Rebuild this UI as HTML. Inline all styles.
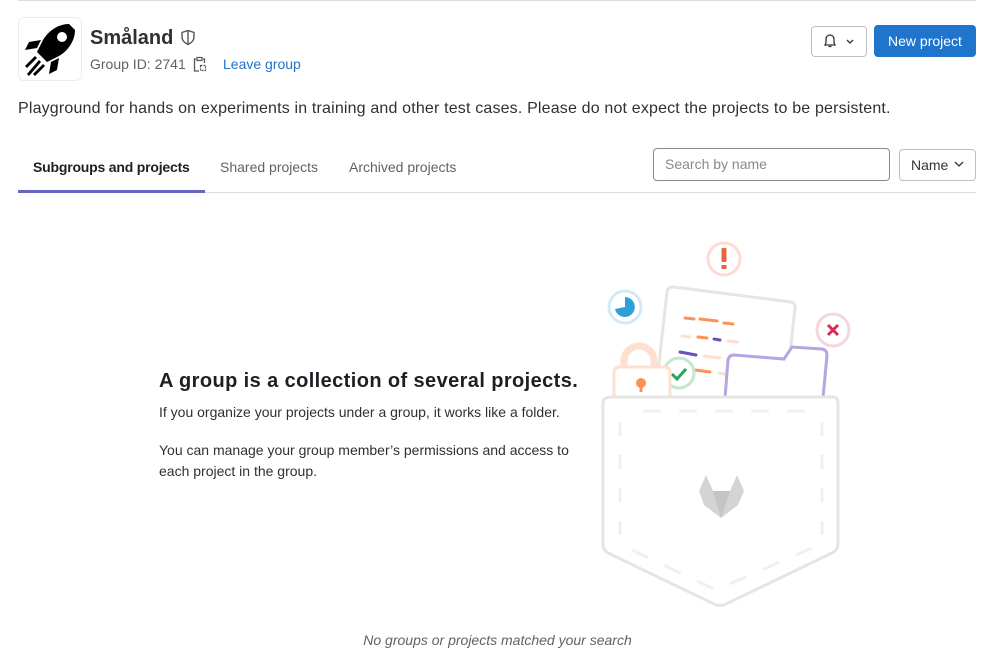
<!DOCTYPE html>
<html><head><meta charset="utf-8"><style>
*{margin:0;padding:0;box-sizing:border-box}
body{width:1000px;height:672px;background:#fff;font-family:"Liberation Sans",sans-serif;color:#303030;position:relative;overflow:hidden}
.a{position:absolute;white-space:nowrap}
</style></head><body>
<div class="a" style="left:18px;top:0;width:958px;height:1px;background:#dcdcde"></div>
<div class="a" style="left:18px;top:17px;width:64px;height:64px;border:1px solid #ececef;border-radius:6px;background:#fff">
<svg width="62" height="62" viewBox="0 0 62 62"><g fill="#000">
<path d="M50 6 C40 6 30 12 24 22 L18 34 L28 44 L40 38 C50 32 56 22 56 12 Z"/>
<path d="M22 22 L10 24 L6 32 L18 30 Z"/><path d="M40 40 L38 52 L30 56 L32 44 Z"/>
<path d="M16 38 L6 48 L8 50 L18 40 Z"/><path d="M20 42 L8 56 L10 58 L22 44 Z"/><path d="M24 46 L14 56 L16 58 L26 48 Z"/>
</g><circle cx="43" cy="19" r="5" fill="#fff"/></svg></div>
<div class="a" style="left:90px;top:27px;font-size:20px;font-weight:bold;color:#303030">Småland</div>
<svg class="a" style="left:180px;top:29px" width="16" height="17" viewBox="0 0 16 17"><path d="M8 1.5 L14 3.5 V8 C14 11.5 11 14 8 15.5 C5 14 2 11.5 2 8 V3.5 Z" fill="none" stroke="#555" stroke-width="1.4"/><path d="M8 2 V15" stroke="#555" stroke-width="1.4"/></svg>
<div class="a" style="left:90px;top:56px;font-size:14px;color:#626168">Group ID: 2741</div>
<svg class="a" style="left:193px;top:56px" width="14" height="17" viewBox="0 0 14 17"><path d="M3 3 H1.5 V15 H6 M10 3 H11.5 V7" fill="none" stroke="#555" stroke-width="1.3"/><rect x="4" y="1.5" width="5" height="3" fill="none" stroke="#555" stroke-width="1.2"/><rect x="7.5" y="9.5" width="5" height="5" fill="none" stroke="#555" stroke-width="1.2" stroke-dasharray="2 1"/></svg>
<div class="a" style="left:223px;top:56px;font-size:14px;color:#1f75cb">Leave group</div>
<div class="a" style="left:811px;top:26px;width:56px;height:31px;border:1px solid #bfbfc3;border-radius:4px"></div>
<svg class="a" style="left:822px;top:33px" width="34" height="16" viewBox="0 0 34 16"><path d="M3 12 H13 L12 10 V6 A4 4 0 0 0 4 6 V10 Z M6.5 13.5 H9.5" fill="none" stroke="#333" stroke-width="1.3"/><path d="M25 7 L28 10 L31 7" fill="none" stroke="#333" stroke-width="1.3"/></svg>
<div class="a" style="left:874px;top:25px;width:102px;height:32px;background:#1f75cb;border-radius:4px;color:#fff;font-size:14px;text-align:center;line-height:32px">New project</div>
<div class="a" style="left:18px;top:100px;font-size:16px;letter-spacing:0.17px;color:#303030">Playground for hands on experiments in training and other test cases. Please do not expect the projects to be persistent.</div>
<div class="a" style="left:33px;top:159px;font-size:14px;font-weight:bold;color:#1f1e24;letter-spacing:-0.2px">Subgroups and projects</div>
<div class="a" style="left:220px;top:159px;font-size:14px;color:#626168">Shared projects</div>
<div class="a" style="left:349px;top:159px;font-size:14px;color:#626168">Archived projects</div>
<div class="a" style="left:18px;top:192px;width:958px;height:1px;background:#dcdcde"></div>
<div class="a" style="left:18px;top:190px;width:187px;height:3px;background:#6666c4"></div>
<div class="a" style="left:653px;top:148px;width:237px;height:33px;border:1px solid #89888d;border-radius:4px;font-size:14px;color:#89888d;padding-left:11px;line-height:31px">Search by name</div>
<div class="a" style="left:899px;top:149px;width:77px;height:32px;border:1px solid #bfbfc3;border-radius:4px;font-size:14px;color:#333;padding-left:11px;line-height:30px">Name</div>
<svg class="a" style="left:953px;top:159px" width="12" height="10"><path d="M2 3 L6 7 L10 3" fill="none" stroke="#333" stroke-width="1.3"/></svg>
<div class="a" style="left:159px;top:370px;font-size:20px;font-weight:bold;color:#1f1e24;letter-spacing:0.4px">A group is a collection of several projects.</div>
<div class="a" style="left:159px;top:404px;font-size:14px;color:#303030">If you organize your projects under a group, it works like a folder.</div>
<div class="a" style="left:159px;top:440px;font-size:14px;color:#303030;line-height:21px">You can manage your group member’s permissions and access to<br>each project in the group.</div>
<div class="a" style="left:0;width:1000px;top:632px;text-align:center;font-size:14px;font-style:italic;color:#626168"><span style="margin-left:-5px">No groups or projects matched your search</span></div>
<svg class="a" style="left:590px;top:230px" width="270" height="390" viewBox="590 230 270 390">
<circle cx="724" cy="259" r="16" fill="#fff" stroke="#fcdcd2" stroke-width="3"/>
<rect x="721.5" y="248" width="5" height="14" rx="1" fill="#e9643f"/><rect x="721.5" y="265" width="5" height="4" fill="#e9643f"/>
<circle cx="625" cy="307" r="16" fill="#fff" stroke="#d2eaf7" stroke-width="3"/>
<path d="M625 297 A10 10 0 1 1 615 309 L625 307 Z" fill="#2e9fd8"/>
<circle cx="833" cy="330" r="16" fill="#fff" stroke="#f6d6dd" stroke-width="3"/>
<path d="M828 325 L838 335 M838 325 L828 335" stroke="#d62d54" stroke-width="3"/>
<path d="M674 287 L791 302 Q796 303 795 308 L785 400 L655 400 L667 292 Q668 286 674 287 Z" fill="#fff" stroke="#e5e5e5" stroke-width="3"/>
<g stroke-width="3" stroke-linecap="round">
<path d="M685 318 L694 319 M700 319 L717 321 M724 323 L733 324" stroke="#fc9356"/>
<path d="M682 336 L690 337" stroke="#fde0cf"/><path d="M698 337 L707 338" stroke="#fc9356"/><path d="M714 339 L720 340" stroke="#6b4fbb"/><path d="M728 341 L738 342" stroke="#fde0cf"/>
<path d="M680 352 L696 355" stroke="#6b4fbb"/><path d="M704 356 L720 358" stroke="#fde0cf"/>
<path d="M695 370 L710 372" stroke="#fc9356"/><path d="M719 373 L725 374" stroke="#fde0cf"/>
</g>
<path d="M725 398 L728 360 Q729 355 734 355 L784 359 L792 347 L822 349 Q827 350 827 355 L823 398 Z" fill="#fff" stroke="#b7a4e2" stroke-width="3"/>
<circle cx="679" cy="373" r="15" fill="#fff" stroke="#c2e8d0" stroke-width="3"/>
<path d="M672 374 L677 379 L686 369" fill="none" stroke="#2da160" stroke-width="3"/>
<path d="M624 372 V361 A15 15 0 0 1 654 361 V372" fill="none" stroke="#fde0cf" stroke-width="7"/>
<rect x="614" y="367" width="56" height="40" rx="5" fill="#fff" stroke="#fde0cf" stroke-width="3"/>
<circle cx="641" cy="383" r="5" fill="#fc9356"/><rect x="639.5" y="384" width="3" height="8" fill="#fc9356"/>
<path d="M612 397 H832 Q838 397 838 403 V544 Q838 550 832 553 L726 604 Q720 607 714 604 L608 553 Q603 550 603 544 V403 Q603 397 612 397 Z" fill="#fff" stroke="#e5e5e5" stroke-width="3"/>
<path d="M643 411 H812" stroke="#f0f0f0" stroke-width="3" stroke-dasharray="18 18"/>
<path d="M620 422 V540 M822 422 V540" stroke="#f0f0f0" stroke-width="3" stroke-dasharray="14 19"/>
<path d="M632 550 L716 590 L812 548" fill="none" stroke="#f0f0f0" stroke-width="3" stroke-dasharray="18 18"/>
<path d="M706 475 L699 491 L704 505 L721 518 L738 505 L744 491 L737 475 L730 491 H713 Z" fill="#d4d4d4"/>
<path d="M713 491 H730 L721 518 Z" fill="#c4c4c4"/>
</svg>
</body></html>
